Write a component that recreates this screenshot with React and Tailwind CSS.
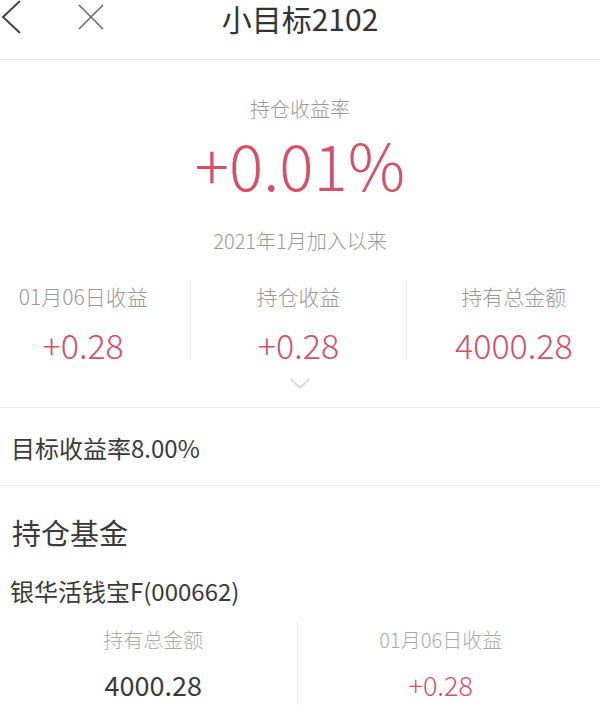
const font = { fontFamily: '"Noto Sans CJK SC", "Noto Sans", sans-serif' };

function Stat({ label, value, first }) {
  return (
    <div className={`flex-1 flex flex-col items-center ${first ? "" : "border-l border-[#ececec]"}`}>
      <div className="h-[30px] leading-[30px] text-[21px] text-[#999] font-light">{label}</div>
      <div className="mt-[19px] h-[30px] leading-[30px] text-[34px] text-[#d4516a] font-light">{value}</div>
    </div>
  );
}

export default function App() {
  return (
    <div className="w-[600px] h-[721px] overflow-hidden bg-white text-[#3a3a3a]" style={font}>
      {/* header */}
      <div className="relative h-[60px] border-b border-[#e8e8e8]">
        <div className="absolute left-0 top-0 flex items-center">
          <svg width="24" height="36" viewBox="0 0 24 36">
            <path d="M20 1 L3 17 L20 33" fill="none" stroke="#444" strokeWidth="2" />
          </svg>
          <svg width="30" height="30" viewBox="0 0 30 30" className="ml-[52px] mt-[-3px]">
            <path d="M3 3 L27 27 M27 3 L3 27" fill="none" stroke="#666" strokeWidth="1.5" />
          </svg>
        </div>
        <div className="h-[38px] leading-[36px] text-center text-[30px] text-[#333]">小目标2102</div>
      </div>

      {/* summary */}
      <div className="flex flex-col items-center font-light">
        <div className="mt-[36px] h-[26px] leading-[26px] text-[20px] text-[#999]">持仓收益率</div>
        <div className="mt-[6px] h-[70px] leading-[70px] text-[64px] text-[#d4516a]">+0.01%</div>
        <div className="mt-[28px] h-[30px] leading-[30px] text-[20px] text-[#999]">2021年1月加入以来</div>
      </div>

      <div className="mt-[25px] w-[645px] ml-[-24px] flex">
        <Stat label="01月06日收益" value="+0.28" first />
        <Stat label="持仓收益" value="+0.28" />
        <Stat label="持有总金额" value="4000.28" />
      </div>

      <div className="flex justify-center mt-[18px] h-[29px]">
        <svg width="20" height="12" viewBox="0 0 20 12">
          <path d="M1 1 L10 10 L19 1" fill="none" stroke="#cfcfd4" strokeWidth="1.5" />
        </svg>
      </div>

      {/* target */}
      <div className="border-t border-b border-[#ececec] h-[79px] flex items-center pl-[11px] pt-[2px] text-[24px]">
        目标收益率8.00%
      </div>

      {/* holdings */}
      <div className="px-[12px]">
        <div className="mt-[28px] h-[36px] leading-[36px] text-[29px]">持仓基金</div>
        <div className="ml-[-2px] mt-[26px] h-[30px] leading-[30px] text-[24px]">银华活钱宝F(000662)</div>
      </div>

      <div className="mt-[16px] flex">
        <div className="flex-1 flex flex-col items-center pl-[10px] pt-[3px] pb-[5px]">
          <div className="h-[30px] leading-[30px] text-[20px] text-[#aaa] font-light">持有总金额</div>
          <div className="mt-[15px] h-[30px] leading-[30px] text-[27px]">4000.28</div>
        </div>
        <div className="flex-1 flex flex-col items-center border-l border-[#ececec] pr-[16px] pt-[3px] pb-[5px]">
          <div className="h-[30px] leading-[30px] text-[20px] text-[#aaa] font-light">01月06日收益</div>
          <div className="mt-[15px] h-[30px] leading-[30px] text-[27px] text-[#d4516a] font-light">+0.28</div>
        </div>
      </div>
    </div>
  );
}
